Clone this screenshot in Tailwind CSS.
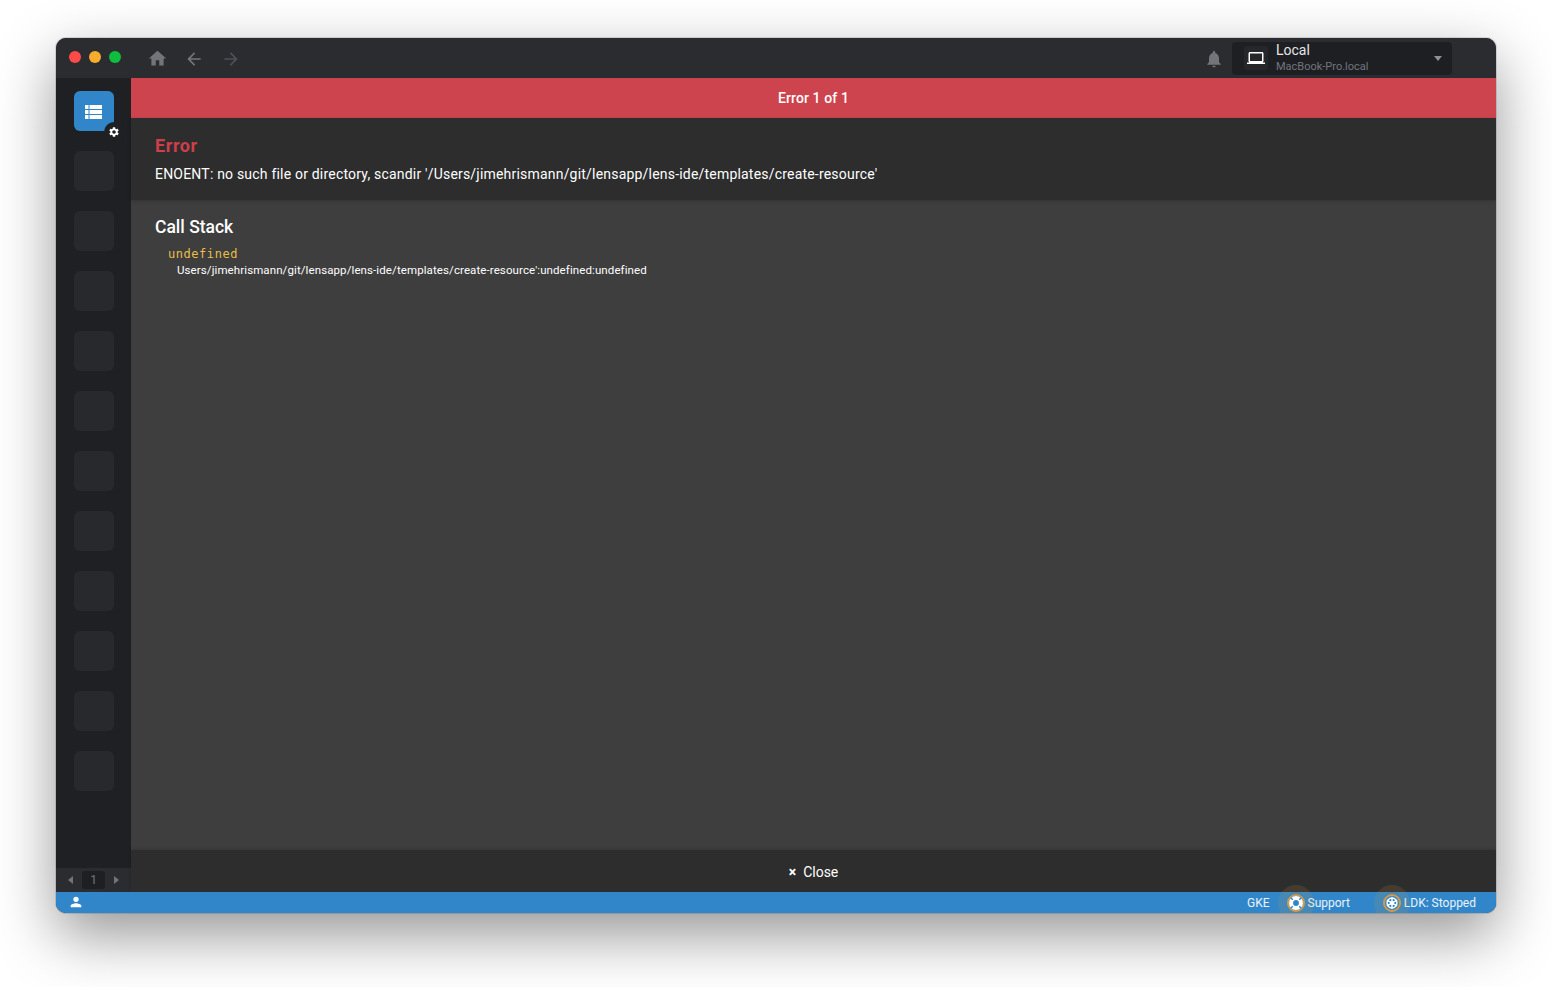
<!DOCTYPE html>
<html>
<head>
<meta charset="utf-8">
<script src="https://cdn.jsdelivr.net/npm/@tailwindcss/browser@4"></script>
</head>
<body class="bg-white font-['Roboto',sans-serif] overflow-hidden">
<div class="w-[1552px] h-[987px] pt-[38px] pl-[56px] overflow-hidden">
  <div class="w-[1440px] h-[875px] rounded-[10px] overflow-hidden flex flex-col shadow-[0_22px_60px_0_rgba(0,0,0,0.42),0_0_0_1px_rgba(0,0,0,0.12)] bg-[#2d2d2d]">
    <!-- title bar -->
    <header class="h-10 shrink-0 bg-[#2a2c30] flex items-center">
      <div class="flex items-center gap-2 ml-[13px] -mt-[2px]">
        <span class="w-3 h-3 rounded-full bg-[#ff4a4a]"></span>
        <span class="w-3 h-3 rounded-full bg-[#f7ac2d]"></span>
        <span class="w-3 h-3 rounded-full bg-[#0ebf3e]"></span>
      </div>
      <svg class="ml-[26px] mt-[1px]" width="21" height="21" viewBox="0 0 24 24" fill="#72767b"><path d="M10 20v-6h4v6h5v-8h3L12 3 2 12h3v8z"/></svg>
      <svg class="ml-[16px] mt-[1px]" width="20" height="20" viewBox="0 0 24 24" fill="#72767b"><path d="M20 11H7.83l5.59-5.59L12 4l-8 8 8 8 1.41-1.41L7.83 13H20v-2z"/></svg>
      <svg class="ml-[17px] mt-[1px]" width="20" height="20" viewBox="0 0 24 24" fill="#4d5055"><path d="M12 4l-1.41 1.41L16.17 11H4v2h12.17l-5.58 5.59L12 20l8-8z"/></svg>
      <div class="flex-1"></div>
      <svg class="mt-[1px]" width="20" height="20" viewBox="0 0 24 24" fill="#72767b"><path d="M12 22c1.1 0 2-.9 2-2h-4c0 1.1.9 2 2 2zm6-6v-5c0-3.07-1.63-5.64-4.5-6.32V4c0-.83-.67-1.5-1.5-1.5s-1.5.67-1.5 1.5v.68C7.64 5.36 6 7.92 6 11v5l-2 2v1h16v-1l-2-2z"/></svg>
      <div class="ml-[8px] mr-[44px] w-[220px] h-[33px] rounded-[4px] bg-[#1e1f23] flex items-center pl-3 pr-[10px]">
        <div class="w-6 h-6 rounded-[3px] bg-[#25272b] flex items-center justify-center">
          <svg width="18" height="18" viewBox="0 0 24 24" fill="#ffffff"><path d="M20 18c1.1 0 1.99-.9 1.99-2L22 6c0-1.1-.9-2-2-2H4c-1.1 0-2 .9-2 2v10c0 1.1.9 2 2 2H0v2h24v-2h-4zM4 6h16v10H4V6z"/></svg>
        </div>
        <div class="ml-2 flex-1 flex flex-col -mt-[1px]">
          <span class="text-[14px] leading-[16px] text-[#e6e6e6]">Local</span>
          <span class="text-[11px] leading-[14px] mt-[2px] text-[#71767d]">MacBook-Pro.local</span>
        </div>
        <span class="w-0 h-0 border-x-[4.5px] border-x-transparent border-t-[5px] border-t-[#8e9297]"></span>
      </div>
    </header>
    <div class="flex-1 flex min-h-0">
      <!-- sidebar -->
      <aside class="w-[75px] shrink-0 bg-[#1f2023] flex flex-col">
        <div class="flex-1 flex flex-col items-center pt-[13px] gap-5">
          <div class="relative w-10 h-10 rounded-[6px] bg-[#3086c8] flex items-center justify-center">
            <svg class="mt-[2px]" width="17" height="14" viewBox="0 0 17 14" fill="#ffffff"><path d="M0 0h3.500v4H0zM4.500 0H17v4H4.500zM0 5h3.500v4H0zM4.500 5H17v4H4.500zM0 10h3.500v4H0zM4.500 10H17v4H4.500z"/></svg>
            <div class="absolute -right-[10px] -bottom-[11px] w-[20px] h-[20px] rounded-full bg-[#1f2023] flex items-center justify-center">
              <svg width="12" height="12" viewBox="0 0 24 24" fill="#ffffff"><path d="M19.14 12.94c.04-.3.06-.61.06-.94s-.02-.64-.07-.94l2.03-1.58a.49.49 0 0 0 .12-.61l-1.92-3.32a.49.49 0 0 0-.59-.22l-2.39.96a7 7 0 0 0-1.62-.94l-.36-2.54a.48.48 0 0 0-.48-.41h-3.84a.48.48 0 0 0-.47.41l-.36 2.54c-.59.24-1.13.57-1.62.94l-2.39-.96a.49.49 0 0 0-.59.22L2.73 8.87a.48.48 0 0 0 .12.61l2.03 1.58c-.05.3-.08.63-.08.94s.02.64.07.94l-2.03 1.58a.49.49 0 0 0-.12.61l1.92 3.32c.12.22.37.29.59.22l2.39-.96c.5.38 1.03.7 1.62.94l.36 2.54c.05.24.24.41.48.41h3.84c.24 0 .44-.17.47-.41l.36-2.54c.59-.24 1.13-.56 1.62-.94l2.39.96c.22.08.47 0 .59-.22l1.92-3.32a.48.48 0 0 0-.12-.61l-2.01-1.58zM12 15.600A3.610 3.610 0 0 1 8.400 12c0-1.980 1.620-3.600 3.600-3.600s3.600 1.620 3.600 3.600-1.620 3.600-3.600 3.600z"/></svg>
            </div>
          </div>
          <div class="w-10 h-10 rounded-[6px] bg-[#28292d]"></div>
          <div class="w-10 h-10 rounded-[6px] bg-[#28292d]"></div>
          <div class="w-10 h-10 rounded-[6px] bg-[#28292d]"></div>
          <div class="w-10 h-10 rounded-[6px] bg-[#28292d]"></div>
          <div class="w-10 h-10 rounded-[6px] bg-[#28292d]"></div>
          <div class="w-10 h-10 rounded-[6px] bg-[#28292d]"></div>
          <div class="w-10 h-10 rounded-[6px] bg-[#28292d]"></div>
          <div class="w-10 h-10 rounded-[6px] bg-[#28292d]"></div>
          <div class="w-10 h-10 rounded-[6px] bg-[#28292d]"></div>
          <div class="w-10 h-10 rounded-[6px] bg-[#28292d]"></div>
          <div class="w-10 h-10 rounded-[6px] bg-[#28292d]"></div>
        </div>
        <div class="h-6 shrink-0 bg-[#2a2c30] flex items-center pl-3">
          <span class="w-0 h-0 border-y-[4px] border-y-transparent border-r-[5px] border-r-[#72767b]"></span>
          <span class="ml-[9px] w-[23px] h-[18px] rounded-[3px] bg-[#1e1f23] text-[12px] leading-[18px] text-center text-[#72767b]">1</span>
          <span class="ml-[9px] w-0 h-0 border-y-[4px] border-y-transparent border-l-[5px] border-l-[#72767b]"></span>
        </div>
      </aside>
      <!-- main -->
      <main class="flex-1 min-w-0 flex flex-col bg-[#3e3e3e]">
        <div class="h-10 shrink-0 bg-[#ce444e] flex items-center justify-center text-[14px] font-medium text-white tracking-[0.1px]">Error 1 of 1</div>
        <section class="h-[82px] shrink-0 bg-[#2d2d2d] pl-6 pt-[17px] shadow-[0_1px_4px_rgba(0,0,0,0.2)] relative">
          <h1 class="text-[18px] leading-[21px] font-bold text-[#ce3f4c] tracking-[0.6px]">Error</h1>
          <p class="mt-[10px] text-[14px] leading-[16px] text-white tracking-[0.2px]">ENOENT: no such file or directory, scandir '/Users/jimehrismann/git/lensapp/lens-ide/templates/create-resource'</p>
        </section>
        <section class="flex-1 min-h-0 pl-6 pt-[17px]">
          <h2 class="text-[17.500px] leading-[21px] font-medium text-white">Call Stack</h2>
          <div class="mt-[8px] pl-[13px] font-['DejaVu_Sans_Mono',monospace] text-[12px] leading-[16px] text-[#e8bf4a] tracking-[0.55px]">undefined</div>
          <div class="pl-[22px] text-[11.500px] leading-[16px] text-white tracking-[0.1px]">Users/jimehrismann/git/lensapp/lens-ide/templates/create-resource':undefined:undefined</div>
        </section>
        <div class="h-[42px] shrink-0 bg-[#2d2d2d] flex items-center justify-center text-[14px] text-white shadow-[0_-1px_3px_rgba(0,0,0,0.15)] relative pt-[2px]">
          <span class="text-[14px] font-bold mr-[7px]">×</span><span>Close</span>
        </div>
      </main>
    </div>
    <!-- status bar -->
    <footer class="h-[21px] shrink-0 bg-[#3086c8] flex items-center text-[12px] text-white/90 relative">
      <svg class="ml-[12px] -mt-[2px]" width="16" height="16" viewBox="0 0 24 24" fill="#ffffff"><path d="M12 12a4 4 0 1 0 0-8 4 4 0 0 0 0 8zm0 2c-2.670 0-8 1.340-8 4v2h16v-2c0-2.660-5.330-4-8-4z"/></svg>
      <div class="flex-1"></div>
      <span>GKE</span>
      <span class="relative ml-[17px] w-[18px] h-[18px] rounded-full bg-[#3086c8] border-2 border-[#d39a4e] shadow-[0_0_0_9px_rgba(211,154,78,0.14)] flex items-center justify-center">
        <svg width="14" height="14" viewBox="0 0 24 24" fill="none"><circle cx="12" cy="12" r="8.500" stroke="#ffffff" stroke-width="7"/><path d="M6.500 6.500 3 3M17.500 6.500 21 3M6.500 17.500 3 21M17.500 17.500 21 21" stroke="#3086c8" stroke-width="2.500"/></svg>
      </span>
      <span class="ml-[3px]">Support</span>
      <span class="relative ml-[33px] w-[18px] h-[18px] rounded-full bg-[#3086c8] border-2 border-[#d39a4e] shadow-[0_0_0_9px_rgba(211,154,78,0.14)] flex items-center justify-center">
        <svg width="14" height="14" viewBox="0 0 24 24" fill="none" stroke="#ffffff" stroke-width="2.500"><circle cx="12" cy="12" r="8.500"/><circle cx="12" cy="12" r="2.500" fill="#ffffff"/><path d="M12 2v20M3.300 7l17.400 10M3.300 17l17.400-10"/></svg>
      </span>
      <span class="ml-[3px] mr-5">LDK: Stopped</span>
    </footer>
  </div>
</div>
</body>
</html>
